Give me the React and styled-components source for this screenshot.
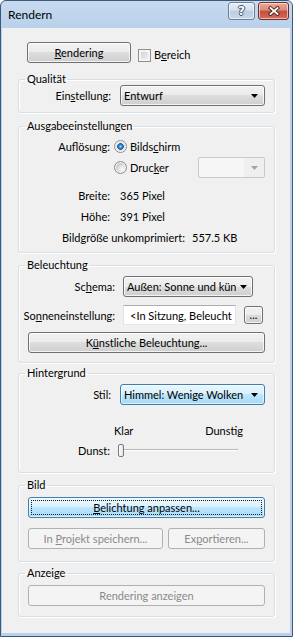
import React from 'react';
import styled, { createGlobalStyle, css } from 'styled-components';

const GlobalStyle = createGlobalStyle`
  html, body {
    margin: 0;
    padding: 0;
  }
  body {
    font-family: Lato, "Liberation Sans", sans-serif;
    font-size: 11px;
    color: #000;
    background: #fff;
  }
`;

const Window = styled.div`
  box-sizing: border-box;
  width: 293px;
  height: 637px;
  display: flex;
  flex-direction: column;
  border: 1px solid #3b5877;
  border-radius: 6px 6px 0 0;
  background: linear-gradient(#c7daef 0, #b9d1ea 27px, #b9d1ea 100%);
  padding: 0 2px 3px 1px;
`;

const TitleBar = styled.div`
  height: 27px;
  display: flex;
  align-items: flex-start;
`;

const Title = styled.div`
  flex: 1;
  padding: 6px 0 0 6px;
  line-height: 16px;
  font-size: 12px;
`;

const CaptionButtons = styled.div`
  display: flex;
  gap: 3px;
  padding-top: 1px;
  margin-right: 1px;
`;

const CaptionButton = styled.div`
  box-sizing: border-box;
  width: ${p => p.$w}px;
  height: 18px;
  border-radius: 3px;
  display: flex;
  align-items: center;
  justify-content: center;
  border: 1px solid #6e7f93;
  background: linear-gradient(#e6edf5 0%, #d5e1ee 45%, #bccde2 50%, #c9d8ea 100%);
  box-shadow: inset 0 0 0 1px rgba(255, 255, 255, 0.55);
  ${p => p.$close && css`
    border-color: #6f2f28;
    background: linear-gradient(#eaa898 0%, #d9897a 45%, #c44f3e 50%, #d26d58 100%);
  `}
`;

const HelpGlyph = styled.span`
  font-family: "DejaVu Sans", sans-serif;
  font-weight: bold;
  font-size: 12px;
  line-height: 12px;
  color: #fff;
  text-shadow: 1px 0 #3d5068, -1px 0 #3d5068, 0 1px #3d5068, 0 -1px #3d5068;
`;

const Client = styled.div`
  flex: 1;
  display: flex;
  flex-direction: column;
  background: #f0f0f0;
  padding: 14px 15px 0 16px;
`;

const TopRow = styled.div`
  display: flex;
  align-items: flex-end;
  height: 21px;
  margin: 0 0 10px 9px;
`;

const Acc = styled.span`
  text-decoration: underline;
  text-underline-offset: 1px;
`;

const buttonFace = css`
  border: 1px solid #707070;
  border-radius: 3px;
  background: linear-gradient(#f2f2f2 0%, #ebebeb 50%, #dddddd 50%, #cfcfcf 100%);
  box-shadow: inset 0 0 0 1px rgba(255, 255, 255, 0.75);
`;

const hoverFace = css`
  border: 1px solid #3c7fb1;
  border-radius: 3px;
  background: linear-gradient(#eaf6fd 0%, #d9f0fc 50%, #bee6fd 50%, #a7d9f5 100%);
  box-shadow: inset 0 0 0 1px rgba(255, 255, 255, 0.6);
`;

const Button = styled.button`
  box-sizing: border-box;
  width: ${p => (p.$w ? `${p.$w}px` : '100%')};
  height: 21px;
  margin: 0;
  padding: 0 4px;
  font: inherit;
  color: #000;
  white-space: nowrap;
  ${buttonFace}
  ${p => p.$default && css`
    ${hoverFace}
    outline: 1px dotted #202020;
    outline-offset: -4px;
  `}
  &:disabled {
    color: #8a8a8a;
    border-color: #adb2b5;
    background: #f4f4f4;
    box-shadow: none;
  }
`;

const CheckLabel = styled.label`
  display: flex;
  align-items: center;
  gap: 3px;
  margin: 0 0 1px 7px;
  line-height: 14px;
`;

const CheckBox = styled.span`
  box-sizing: border-box;
  width: 13px;
  height: 13px;
  border: 1px solid #8e8f8f;
  background: linear-gradient(135deg, #c6cbd1, #f7f7f7);
  box-shadow: inset 0 0 0 2px #f4f4f4;
`;

const Group = styled.fieldset`
  margin: ${p => p.$mt || 0}px 0 0;
  padding: ${p => p.$pt || 0}px 9px ${p => p.$pb || 0}px;
  min-width: 0;
  border: 1px solid #d5dfe5;
  border-radius: 3px;
  box-shadow: inset 1px 1px 0 #fff, 1px 1px 0 #fff;
`;

const Legend = styled.legend`
  margin-left: -3px;
  padding: 0 2px;
  line-height: 12px;
`;

const LabeledRow = styled.div`
  display: grid;
  grid-template-columns: ${p => p.$label}px 1fr;
  column-gap: ${p => p.$gap}px;
  align-items: center;
  height: ${p => p.$h || 21}px;
  margin-top: ${p => p.$mt || 0}px;
`;

const FieldLabel = styled.div`
  display: flex;
  justify-content: flex-end;
  white-space: nowrap;
`;

const Value = styled.span`
  white-space: nowrap;
`;

const Combo = styled.div`
  box-sizing: border-box;
  width: ${p => (p.$w ? `${p.$w}px` : '100%')};
  height: 21px;
  display: flex;
  align-items: center;
  gap: 4px;
  padding: 0 ${p => p.$rp || 6}px 0 3px;
  ${p => (p.$hover ? hoverFace : buttonFace)}
`;

const ComboText = styled.span`
  flex: 1;
  overflow: hidden;
  white-space: nowrap;
`;

const DisabledCombo = styled.div`
  box-sizing: border-box;
  width: 67px;
  height: 21px;
  display: flex;
  margin-left: auto;
  border: 1px solid #c7c9cb;
  border-radius: 2px;
  background: #f6f6f6;
`;

const DropZone = styled.div`
  width: 20px;
  margin-left: auto;
  display: flex;
  align-items: center;
  justify-content: center;
  background: #efefef;
`;

const RadioLine = styled.div`
  grid-column: 2;
  display: flex;
  align-items: center;
`;

const RadioOption = styled.label`
  display: flex;
  align-items: center;
  gap: 3px;
`;

const Radio = styled.span`
  box-sizing: border-box;
  width: 13px;
  height: 13px;
  border-radius: 50%;
  border: 1px solid #8e8f8f;
  background: ${p => (p.$checked
    ? 'radial-gradient(circle, #a7e3ff 0, #3a95d9 1.4px, #1a5a9e 3px, #dedede 3.6px, #f2f2f2 5.5px)'
    : 'radial-gradient(circle at 65% 65%, #fbfbfb 0, #e2e4e7 3px, #c9cdd2 6px)')};
  box-shadow: inset 0 0 0 1px #f5f5f5;
`;

const TextBox = styled.div`
  box-sizing: border-box;
  width: 113px;
  height: 20px;
  display: flex;
  align-items: center;
  padding: 0 2px 0 6px;
  background: #fff;
  border: 1px solid #e2e3ea;
  border-top-color: #abadb3;
  border-bottom-color: #e3e9ef;
  overflow: hidden;
  white-space: nowrap;
`;

const Inline = styled.div`
  display: flex;
  align-items: center;
  gap: 8px;
`;

const SmallButton = styled(Button)`
  width: 19px;
  height: 18px;
  padding: 0;
  line-height: 10px;
`;

const Stack = styled.div`
  margin-top: ${p => p.$mt || 0}px;
`;

const ScaleLabels = styled.div`
  display: flex;
  justify-content: space-between;
  width: 129px;
  height: 14px;
  line-height: 14px;
  margin: 19px 0 0 86px;
`;

const Slider = styled.div`
  width: 120px;
  height: 14px;
  display: flex;
  align-items: center;
  background:
    linear-gradient(#b9b9b9, #b9b9b9) 0 6px / 100% 1px no-repeat,
    linear-gradient(#ffffff, #ffffff) 0 7px / 100% 1px no-repeat;
`;

const Thumb = styled.div`
  box-sizing: border-box;
  width: 6px;
  height: 13px;
  border: 1px solid #7a7a7a;
  border-radius: 2px;
  background: linear-gradient(90deg, #ffffff, #e3e3e3);
`;

const ButtonPair = styled.div`
  display: grid;
  grid-template-columns: 135px 1fr;
  column-gap: 5px;
  margin-top: 10px;
`;

const Arrow = ({ color = '#000' }) => (
  <svg width="7" height="4" viewBox="0 0 7 4">
    <path d="M0 0h7L3.5 4z" fill={color} />
  </svg>
);

const CloseGlyph = () => (
  <svg width="12" height="10" viewBox="0 0 12 10">
    <path d="M2.5 2l7 6M9.5 2l-7 6" stroke="#4a1d17" strokeWidth="3.6" strokeLinecap="square" />
    <path d="M2.5 2l7 6M9.5 2l-7 6" stroke="#fff" strokeWidth="1.8" strokeLinecap="square" />
  </svg>
);

export default function App() {
  return (
    <>
      <GlobalStyle />
      <Window>
        <TitleBar>
          <Title>Rendern</Title>
          <CaptionButtons>
            <CaptionButton $w={27}><HelpGlyph>?</HelpGlyph></CaptionButton>
            <CaptionButton $w={31} $close><CloseGlyph /></CaptionButton>
          </CaptionButtons>
        </TitleBar>

        <Client>
          <TopRow>
            <Button $w={104}><Acc>R</Acc>endering</Button>
            <CheckLabel>
              <CheckBox />
              <span>B<Acc>e</Acc>reich</span>
            </CheckLabel>
          </TopRow>

          <Group $pb={6}>
            <Legend>Qualität</Legend>
            <LabeledRow $label={83} $gap={9}>
              <FieldLabel><span>Ein<Acc>s</Acc>tellung:</span></FieldLabel>
              <Combo>
                <ComboText>Entwurf</ComboText>
                <Arrow />
              </Combo>
            </LabeledRow>
          </Group>

          <Group $mt={7} $pt={4} $pb={4}>
            <Legend>Ausgabeeinstellungen</Legend>
            <LabeledRow $label={82} $gap={4}>
              <FieldLabel><span>Auflösung:</span></FieldLabel>
              <RadioOption>
                <Radio $checked />
                <span>Bilds<Acc>c</Acc>hirm</span>
              </RadioOption>
            </LabeledRow>
            <LabeledRow $label={82} $gap={4}>
              <RadioLine>
                <RadioOption>
                  <Radio />
                  <span>Druc<Acc>k</Acc>er</span>
                </RadioOption>
                <DisabledCombo>
                  <DropZone><Arrow color="#a3a3a3" /></DropZone>
                </DisabledCombo>
              </RadioLine>
            </LabeledRow>
            <Stack $mt={7}>
              <LabeledRow $label={82} $gap={10}>
                <FieldLabel><span>Breite:</span></FieldLabel>
                <Value>365 Pixel</Value>
              </LabeledRow>
              <LabeledRow $label={82} $gap={10}>
                <FieldLabel><span>Höhe:</span></FieldLabel>
                <Value>391 Pixel</Value>
              </LabeledRow>
              <LabeledRow $label={157} $gap={7}>
                <FieldLabel><span>Bildgröße unkomprimiert:</span></FieldLabel>
                <Value>557.5 KB</Value>
              </LabeledRow>
            </Stack>
          </Group>

          <Group $mt={6} $pt={5} $pb={9}>
            <Legend>Beleuchtung</Legend>
            <LabeledRow $label={87} $gap={8}>
              <FieldLabel><span>Sc<Acc>h</Acc>ema:</span></FieldLabel>
              <Combo $w={130} $rp={5}>
                <ComboText>Außen: Sonne und kün</ComboText>
                <Arrow />
              </Combo>
            </LabeledRow>
            <LabeledRow $label={87} $gap={8} $h={20} $mt={8}>
              <FieldLabel><span>So<Acc>n</Acc>neneinstellung:</span></FieldLabel>
              <Inline>
                <TextBox>&lt;In Sitzung, Beleucht</TextBox>
                <SmallButton>...</SmallButton>
              </Inline>
            </LabeledRow>
            <Stack $mt={7}>
              <Button>K<Acc>ü</Acc>nstliche Beleuchtung...</Button>
            </Stack>
          </Group>

          <Group $mt={4} $pt={5} $pb={15}>
            <Legend>Hintergrund</Legend>
            <LabeledRow $label={83} $gap={9}>
              <FieldLabel><span>St<Acc>i</Acc>l:</span></FieldLabel>
              <Combo $hover>
                <ComboText>Himmel: Wenige Wolken</ComboText>
                <Arrow />
              </Combo>
            </LabeledRow>
            <ScaleLabels>
              <span>Klar</span>
              <span>Dunstig</span>
            </ScaleLabels>
            <LabeledRow $label={82} $gap={8} $h={14} $mt={5}>
              <FieldLabel><span>Dunst:</span></FieldLabel>
              <Slider>
                <Thumb />
              </Slider>
            </LabeledRow>
          </Group>

          <Group $mt={6} $pt={6} $pb={12}>
            <Legend>Bild</Legend>
            <Button $default><Acc>B</Acc>elichtung anpassen...</Button>
            <ButtonPair>
              <Button disabled>In <Acc>P</Acc>rojekt speichern...</Button>
              <Button disabled>Ex<Acc>p</Acc>ortieren...</Button>
            </ButtonPair>
          </Group>

          <Group $mt={5} $pt={6} $pb={10}>
            <Legend>Anzeige</Legend>
            <Button disabled>Rendering anzeigen</Button>
          </Group>
        </Client>
      </Window>
    </>
  );
}
